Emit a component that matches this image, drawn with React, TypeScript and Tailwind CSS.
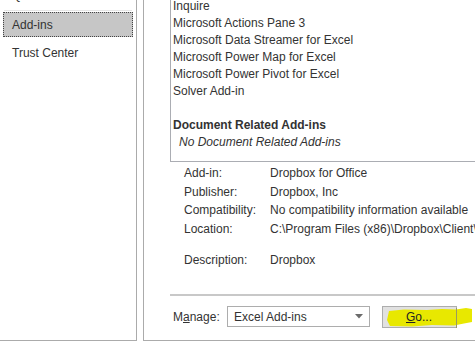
import React from "react";

const font = { fontFamily: '"Liberation Sans", Arial, sans-serif' };

export default function App() {
  const listItems = [
    "Inquire",
    "Microsoft Actions Pane 3",
    "Microsoft Data Streamer for Excel",
    "Microsoft Power Map for Excel",
    "Microsoft Power Pivot for Excel",
    "Solver Add-in",
  ];
  const details: [string, string][] = [
    ["Add-in:", "Dropbox for Office"],
    ["Publisher:", "Dropbox, Inc"],
    ["Compatibility:", "No compatibility information available"],
    ["Location:", "C:\\Program Files (x86)\\Dropbox\\Client\\Dropbox for Office"],
  ];
  return (
    <div
      className="w-[475px] h-[353px] bg-white overflow-hidden flex text-[12px] text-[#333]"
      style={font}
    >
      {/* Left nav */}
      <div className="w-[137px] h-[341px] shrink-0 border-r border-b border-[#ababab] flex flex-col">
        <div className="h-[12px] overflow-hidden flex flex-col">
          <div className="mt-[-17px] h-[25px] pl-[12px] leading-[25px] whitespace-nowrap">
            Quick Access Toolbar
          </div>
          <div className="mt-[2px] mx-[4px] h-[1px] bg-[#e6e6e6]" />
        </div>
        <div className="mx-[3px] h-[25px] bg-[#c6c6c6] border border-dotted border-[#444] pl-[8px] flex items-center">
          Add-ins
        </div>
        <div className="mt-[2px] h-[28px] pl-[12px] flex items-center">Trust Center</div>
      </div>

      {/* Main */}
      <div className="ml-[6px] w-[420px] h-[341px] shrink-0 border-l border-b border-[#ababab] flex flex-col pl-[26px]">
        <div className="border-l border-b border-[#abadb3] pl-[2px] pb-[10px] overflow-hidden">
          <div className="mt-[-2px] leading-[17px] whitespace-nowrap">
            {listItems.map((t) => (
              <div key={t}>{t}</div>
            ))}
            <div>&nbsp;</div>
            <div className="font-bold">Document Related Add-ins</div>
            <div className="italic pl-[6px]">No Document Related Add-ins</div>
          </div>
        </div>

        <div className="pl-[14px] mt-[2px] grid grid-cols-[86px_1fr] leading-[18.5px] whitespace-nowrap">
          {details.map(([k, v]) => (
            <React.Fragment key={k}>
              <div>{k}</div>
              <div>{v}</div>
            </React.Fragment>
          ))}
          <div className="h-[13px]" />
          <div className="h-[13px]" />
          <div>Description:</div>
          <div>Dropbox</div>
        </div>

        <div className="mt-[24px] h-[2px] bg-[#c8c8c8]" />

        <div className="mt-[10px] flex items-center h-[22px]">
          <div className="w-[57px] pl-[3px]">
            M<span className="underline">a</span>nage:
          </div>
          <div className="w-[143px] h-[21px] border border-[#adadad] bg-white flex items-center pl-[6px] pr-[6px] justify-between">
            <span>Excel Add-ins</span>
            <svg width="8" height="5" viewBox="0 0 8 5">
              <path d="M0 0 H8 L4 4.5 Z" fill="#6b6b6b" />
            </svg>
          </div>
          <div className="ml-[12px] relative w-[75px] h-[22px] border border-[#adadad] bg-[#e1e1e1] flex items-center">
            <svg
              className="absolute left-[-1px] top-[-1px] overflow-visible"
              width="92"
              height="24"
              viewBox="0 0 92 24"
            >
              <path
                d="M7 5 L22 3.5 L45 4 L60 3 L74 3.5 L84 2 L90 3 L90 16 L82 17.5 L72 19.5 L50 19 L30 20.5 L8 20 L5 14 Z"
                fill="#e8e800"
              />
              <line x1="74.5" y1="2" x2="74.5" y2="22" stroke="#9a9a60" strokeWidth="1" />
            </svg>
            <span className="relative pl-[23px] text-[#222]">
              <span className="underline">G</span>o...
            </span>
          </div>
        </div>
      </div>
    </div>
  );
}
